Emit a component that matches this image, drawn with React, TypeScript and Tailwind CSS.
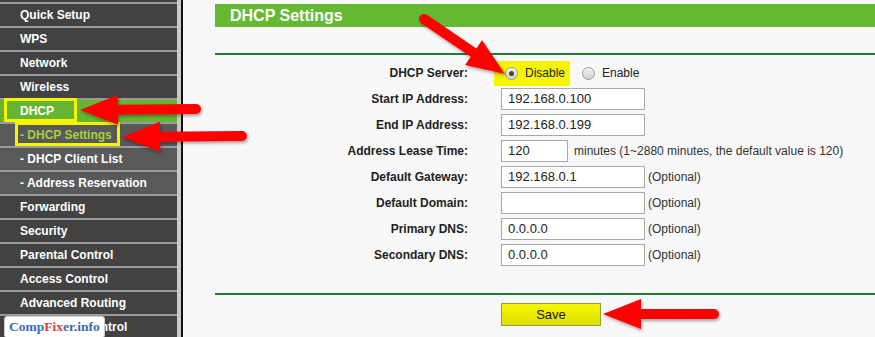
import React from 'react';

const menu: { label: string; sub?: boolean; active?: boolean; open?: boolean; box?: boolean }[] = [
  { label: 'Quick Setup' },
  { label: 'WPS' },
  { label: 'Network' },
  { label: 'Wireless' },
  { label: 'DHCP', open: true, box: true },
  { label: '- DHCP Settings', sub: true, active: true, box: true },
  { label: '- DHCP Client List', sub: true },
  { label: '- Address Reservation', sub: true },
  { label: 'Forwarding' },
  { label: 'Security' },
  { label: 'Parental Control' },
  { label: 'Access Control' },
  { label: 'Advanced Routing' },
  { label: 'Bandwidth Control' },
];

type ArrowProps = { x1: number; y1: number; x2: number; y2: number };

// red annotation arrow, tail (x1,y1) -> tip (x2,y2)
const Arrow = ({ x1, y1, x2, y2 }: ArrowProps) => {
  const dx = x2 - x1;
  const dy = y2 - y1;
  const len = Math.hypot(dx, dy);
  const ux = dx / len;
  const uy = dy / len;
  const nx = -uy;
  const ny = ux;
  const head = 38;
  const hw = 15;
  const sw = 5;
  const bx = x2 - ux * head;
  const by = y2 - uy * head;
  const pts = [
    [x1 + nx * sw, y1 + ny * sw],
    [bx + nx * sw, by + ny * sw],
    [bx + nx * hw, by + ny * hw],
    [x2, y2],
    [bx - nx * hw, by - ny * hw],
    [bx - nx * sw, by - ny * sw],
    [x1 - nx * sw, y1 - ny * sw],
  ]
    .map((p) => p.join(','))
    .join(' ');
  return (
    <g filter="url(#shadow)">
      <polygon points={pts} fill="#ff0000" />
      <circle cx={x1} cy={y1} r={sw} fill="#ff0000" />
    </g>
  );
};

const Radio = ({ checked }: { checked?: boolean }) => (
  <span className="inline-flex h-[13px] w-[13px] items-center justify-center rounded-full border border-[#9a9a9a] bg-gradient-to-b from-[#f4f4f4] to-[#d0d0d0]">
    {checked && <span className="h-[5px] w-[5px] rounded-full bg-[#4a4a10]" />}
  </span>
);

const Field = ({ value, w = 'w-[144px]' }: { value: string; w?: string }) => (
  <div className={`flex h-[22px] ${w} items-center border border-[#a9a9a9] bg-white pl-[6px] text-[13px] text-[#222]`}>
    {value}
  </div>
);

const Optional = () => <span className="ml-[3px] text-[12px] text-[#333]">(Optional)</span>;

const rows: { label: string; value: string }[] = [
  { label: 'Start IP Address:', value: '192.168.0.100' },
  { label: 'End IP Address:', value: '192.168.0.199' },
];

const rows2: { label: string; value: string }[] = [
  { label: 'Default Gateway:', value: '192.168.0.1' },
  { label: 'Default Domain:', value: '' },
  { label: 'Primary DNS:', value: '0.0.0.0' },
  { label: 'Secondary DNS:', value: '0.0.0.0' },
];

export default function App() {
  return (
    <div
      className="relative flex h-[337px] w-[875px] overflow-hidden bg-[#f8f8f8]"
      style={{ fontFamily: '"Liberation Sans", Arial, sans-serif' }}
    >
      {/* sidebar */}
      <div className="flex w-[177px] shrink-0 flex-col bg-[#424242] pt-[2px]">
        {menu.map((m) => (
          <div
            key={m.label}
            className={`h-[24px] shrink-0 border-t-2 border-[#9b9b9b] ${
              m.open ? 'bg-[#66b532]' : m.sub ? 'bg-[#595959]' : 'bg-[#424242]'
            }`}
          >
            <div className="relative flex h-[22px] items-center pl-[20px]">
              {m.box && (
                <span
                  className={`absolute top-[-2px] h-[24px] border-[3px] border-[#f5f500] ${
                    m.sub ? 'left-[15px] w-[105px]' : 'left-[4px] w-[73px]'
                  }`}
                />
              )}
              <span
                className={`text-[12px] font-bold ${m.active ? 'text-[#a6d13c]' : 'text-white'}`}
              >
                {m.label}
              </span>
            </div>
          </div>
        ))}
      </div>
      <div className="w-[4px] shrink-0 bg-[#c9c9c9]" />
      <div className="w-[2px] shrink-0 bg-[#111]" />

      {/* main */}
      <div className="flex flex-1 flex-col pl-[32px] pt-[4px]">
        <div className="flex h-[23px] items-center bg-[#66b933] pl-[15px] text-[16px] font-bold text-white">
          DHCP Settings
        </div>
        <div className="mt-[26px] h-[2px] bg-[#1f7a3c]" />

        <div className="mt-[5px] grid grid-cols-[253px_1fr] gap-x-[33px] text-[12px]">
          <div className="flex h-[26px] items-center justify-end font-bold text-[#222]">DHCP Server:</div>
          <div className="flex h-[26px] items-center">
            <div className="ml-[-7px] flex h-[25px] w-[76px] items-center bg-[#f5f500] pl-[11px]">
              <Radio checked />
              <span className="ml-[7px] text-[12px] text-[#222]">Disable</span>
            </div>
            <span className="ml-[12px] flex">
              <Radio />
            </span>
            <span className="ml-[7px] text-[12px] text-[#222]">Enable</span>
          </div>

          {rows.map((r) => (
            <React.Fragment key={r.label}>
              <div className="flex h-[26px] items-center justify-end font-bold text-[#222]">{r.label}</div>
              <div className="flex h-[26px] items-center">
                <Field value={r.value} />
              </div>
            </React.Fragment>
          ))}

          <div className="flex h-[26px] items-center justify-end font-bold text-[#222]">Address Lease Time:</div>
          <div className="flex h-[26px] items-center">
            <Field value="120" w="w-[67px]" />
            <span className="ml-[6px] text-[12px] text-[#333]">
              minutes (1~2880 minutes, the default value is 120)
            </span>
          </div>

          {rows2.map((r) => (
            <React.Fragment key={r.label}>
              <div className="flex h-[26px] items-center justify-end font-bold text-[#222]">{r.label}</div>
              <div className="flex h-[26px] items-center">
                <Field value={r.value} />
                <Optional />
              </div>
            </React.Fragment>
          ))}
        </div>

        <div className="mt-[25px] h-[2px] bg-[#1f7a3c]" />
        <div className="mt-[8px] flex pl-[286px]">
          <button className="h-[23px] w-[100px] border border-[#9b9b3a] bg-gradient-to-b from-[#f8f800] to-[#dede00] text-[13px] text-[#111]">
            Save
          </button>
        </div>
      </div>

      {/* annotations */}
      <svg className="pointer-events-none absolute left-0 top-0" width="875" height="337">
        <defs>
          <filter id="shadow" x="-20%" y="-40%" width="140%" height="180%">
            <feDropShadow dx="1" dy="2" stdDeviation="1.5" floodColor="#000" floodOpacity="0.35" />
          </filter>
        </defs>
        <Arrow x1={424} y1={19} x2={505} y2={74} />
        <Arrow x1={196} y1={109} x2={80} y2={110} />
        <Arrow x1={242} y1={136} x2={122} y2={137} />
        <Arrow x1={714} y1={314} x2={603} y2={314} />
      </svg>

      <div
        className="absolute left-[4px] top-[316px] flex h-[22px] items-center rounded-[3px] border border-[#ccc] bg-white px-[4px] text-[13.5px] font-bold"
        style={{ fontFamily: '"Liberation Serif", "DejaVu Serif", serif' }}
      >
        <span className="text-[#3b6bb5]">Comp</span>
        <span className="text-[#e23a3a]">Fix</span>
        <span className="text-[#3b6bb5]">er.info</span>
      </div>
    </div>
  );
}
